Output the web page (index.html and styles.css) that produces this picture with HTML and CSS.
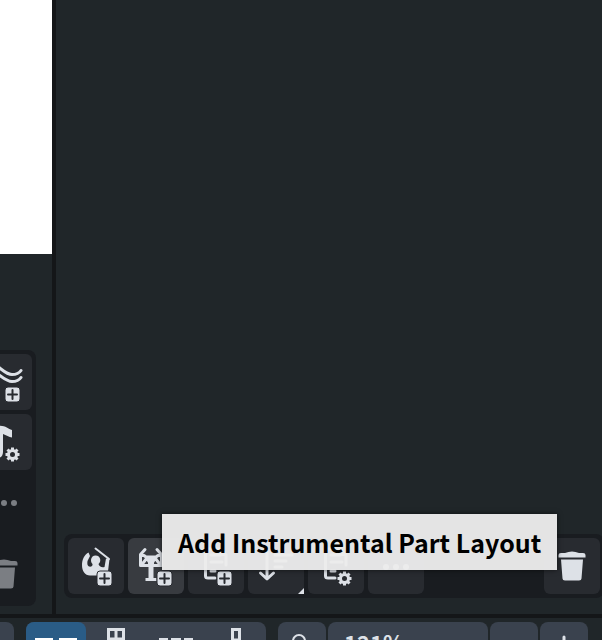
FILE: index.html
```html
<!DOCTYPE html>
<html lang="en">
<head>
    <meta charset="UTF-8">
    <meta name="viewport" content="width=device-width, initial-scale=1.0">
    <title>Layouts</title>
    <link rel="stylesheet" href="styles.css">
</head>
<body>
    <div class="app">
        <div class="workspace">
            <div class="score-area">
                <div class="page"></div>
                <div class="toolbar toolbar-side">
                    <button class="tool" aria-label="Add flow">
                        <svg viewBox="0 0 56 56">
                            <g class="line"><path d="M14 9C21 9 28 20.500 36 20.500C41 20.500 44 18 45 16.500M14 16C21 17 28 27.500 36 27.500C41 27.500 44 25 45 23.500"/></g>
                            <use href="#plus-badge"/>
                        </svg>
                    </button>
                    <button class="tool" aria-label="Notation options">
                        <svg viewBox="0 0 56 56">
                            <path d="M22 12C29 11 32 15 36 16V23.500C33 23 30 21 27 20V38C27 43 23 45 18 45V40L22 38Z"/>
                            <use href="#gear-badge"/>
                        </svg>
                    </button>
                    <button class="tool" disabled aria-label="More">
                        <svg viewBox="0 0 56 56"><use href="#dots"/></svg>
                    </button>
                    <button class="tool push-down" disabled aria-label="Delete flow">
                        <svg viewBox="0 0 56 56"><use href="#trash"/></svg>
                    </button>
                </div>
            </div>
            <div class="layouts-panel">
                <div class="toolbar toolbar-bottom">
                    <button class="tool" aria-label="Add full score layout">
                        <svg viewBox="0 0 56 56">
                            <path d="M20.500 14.500C16 17 14 22 14 27C14 33 17 37.500 22 37.500H39.500L41.500 21L38 20.500L36.500 29C33.500 30 31 28 30.500 26C33.500 24 33 17.500 27.500 17.500C22.500 17.500 22 24 24.500 26C25 28 23 29 21 28.500C19.500 28 19 26 19.500 23L22 18Z"/>
                            <path class="baton" d="M27.500 10.500L41 21"/>
                            <use href="#plus-badge"/>
                        </svg>
                    </button>
                    <button class="tool hovered" aria-describedby="tip" aria-label="Add instrumental part layout">
                        <svg viewBox="0 0 56 56">
                            <path class="stand" d="M17 11.500L12.500 16.500V27.500H33.500V16.500L29 11.500M12.500 17.500H16L18 19H28L30 17.500H33.500M13.500 27L19 20L23 27L27 20L32.500 27"/>
                            <path d="M18 18H28L26 24V29H25.500V40H28.500V43H17.500V40H20.500V29H20V24Z"/>
                            <use href="#plus-badge"/>
                        </svg>
                    </button>
                    <button class="tool" aria-label="Add custom score layout">
                        <svg viewBox="0 0 56 56"><use href="#sheet"/><use href="#plus-badge"/></svg>
                    </button>
                    <button class="tool" aria-label="Sort layouts">
                        <svg viewBox="0 0 56 56">
                            <path class="line" d="M19 14V40M12.500 35L19 41L25.500 35M27 17H44M27 23H38M27 29H34"/>
                            <path d="M56 50V56H50Z"/>
                        </svg>
                    </button>
                    <button class="tool" aria-label="Layout options">
                        <svg viewBox="0 0 56 56"><use href="#sheet"/><use href="#gear-badge"/></svg>
                    </button>
                    <button class="tool" aria-label="More">
                        <svg viewBox="0 0 56 56"><use href="#dots"/></svg>
                    </button>
                    <button class="tool push-right" aria-label="Delete layout">
                        <svg viewBox="0 0 56 56"><use href="#trash"/></svg>
                    </button>
                    <div class="tooltip" role="tooltip" id="tip">Add Instrumental Part Layout</div>
                </div>
            </div>
        </div>

        <div class="status-bar">
            <button class="control control-first" aria-label="Previous"></button>
            <div class="view-group">
                <button class="view active" aria-label="Spreads horizontally">
                    <svg viewBox="0 0 60 48"><path d="M9 16H27V36H9ZM33 16H51V36H33Z"/></svg>
                </button>
                <button class="view" aria-label="Spreads vertically">
                    <svg viewBox="0 0 60 48"><path class="frame" d="M22.500 7.500H37.500V41H22.500ZM22 17H38M22 29H38M30 7V41"/></svg>
                </button>
                <button class="view" aria-label="Single pages horizontally">
                    <svg viewBox="0 0 60 48"><path d="M13 16H22V32H13ZM25 16H35V32H25ZM38 16H47V32H38Z"/></svg>
                </button>
                <button class="view" aria-label="Single pages vertically">
                    <svg viewBox="0 0 60 48"><path class="frame" d="M26.500 7.500H33.500V41H26.500ZM26 18H34M26 29H34"/></svg>
                </button>
            </div>
            <div class="zoom-group">
                <button class="control" aria-label="Zoom">
                    <svg viewBox="0 0 48 48"><g class="lens"><circle cx="21" cy="19" r="6"/><path d="M26 24L33 32"/></g></svg>
                </button>
                <input class="zoom-value" type="text" value="121%" aria-label="Zoom level">
                <button class="control" aria-label="Zoom out">
                    <svg viewBox="0 0 48 48"><path class="line" d="M15 24H33"/></svg>
                </button>
                <button class="control" aria-label="Zoom in">
                    <svg viewBox="0 0 48 48"><path class="line" d="M24 15V33M15 24H33"/></svg>
                </button>
            </div>
        </div>
    </div>

    <!-- shared icon parts -->
    <svg class="icon-parts">
        <symbol id="plus-badge" viewBox="0 0 56 56">
            <rect class="badge" x="29" y="33" width="15" height="15" rx="3"/>
            <path class="cut" d="M36.500 36V45M32 40.500H41"/>
        </symbol>
        <symbol id="gear-badge" viewBox="0 0 56 56">
            <circle class="ring" cx="36.500" cy="40.500" r="4"/>
            <path class="teeth" d="M36.500 33.500V37M36.500 44V47.500M29.500 40.500H33M40 40.500H43.500M31.500 35.500L34 38M39 43L41.500 45.500M41.500 35.500L39 38M34 43L31.500 45.500"/>
        </symbol>
        <symbol id="sheet" viewBox="0 0 56 56">
            <path class="line" d="M27 40H20Q17.500 40 17.500 38V13Q17.500 11 20 11H32L38 17V27M23 17H32M23 24H34M23 33H27"/>
            <path d="M31 10L39 18H31Z"/>
        </symbol>
        <symbol id="dots" viewBox="0 0 56 56">
            <circle cx="18" cy="29" r="3"/><circle cx="28" cy="29" r="3"/><circle cx="38" cy="29" r="3"/>
        </symbol>
        <symbol id="trash" viewBox="0 0 56 56">
            <path d="M14.500 19.500V17Q14.500 15 17 15H21Q28 12 35 15H39Q41.500 15 41.500 17V19.500ZM17 21.500H39L37.500 40.500Q37.500 42.500 35 42.500H21Q18.500 42.500 18.500 40.500Z"/>
        </symbol>
    </svg>
</body>
</html>
```

FILE: styles.css
```css
*{
    box-sizing: border-box;
}
body{
    margin: 0;
    background-color: #202629;
    color: #dde1e7;
    font-family: "Noto Sans CJK SC", "Open Sans", sans-serif;
}
button,input{
    margin: 0;
    padding: 0;
    border: none;
    color: inherit;
    font-family: inherit;
}
.app{
    display: flex;
    flex-direction: column;
    height: 100vh;
    overflow: hidden;
}
.workspace{
    display: flex;
    flex: 1;
    min-height: 0;
}

/* score area, left of the panel divider */
.score-area{
    display: flex;
    flex-direction: column;
    align-items: flex-end;
    width: 52px;
    overflow: hidden;
}
.page{
    flex: 1;
    width: 100%;
    margin-bottom: 96px;
    background-color: white;
}
.layouts-panel{
    display: flex;
    flex: 1;
    flex-direction: column;
    justify-content: flex-end;
    min-width: 0;
    padding: 0 0 16px 8px;
    border-left: 4px solid #141618;
}

.toolbar{
    display: flex;
    flex-shrink: 0;
    gap: 4px;
    padding: 4px;
    border-radius: 8px;
    background-color: #191c20;
}
.toolbar-side{
    flex-direction: column;
    height: 256px;
    margin: 0 16px 8px 0;
}
.toolbar-bottom{
    position: relative;
    margin-right: -2px;
}
.tool{
    flex-shrink: 0;
    width: 56px;
    height: 56px;
    border-radius: 6px;
    background-color: #282b30;
}
.tool:disabled{
    background-color: transparent;
    color: #7b7e83;
}
.hovered{
    background-color: #383b40;
}
.push-down{
    margin-top: auto;
}
.push-right{
    margin-left: auto;
}

.tooltip{
    position: absolute;
    left: 98px;
    bottom: 28px;
    padding: 0 16px;
    background-color: rgb(236, 236, 236, .96);
    box-shadow: 0 0 5px rgb(0, 0, 0, .6);
    color: black;
    font-size: 25px;
    font-weight: 700;
    line-height: 56px;
    white-space: nowrap;
}

/* status bar */
.status-bar{
    display: flex;
    flex-shrink: 0;
    gap: 12px;
    height: 26px;
    padding-top: 4px;
    border-top: 4px solid #141618;
    overflow: hidden;
}
.control,.view,.zoom-value{
    flex-shrink: 0;
    height: 48px;
    border-radius: 8px;
    background-color: #3a424e;
}
.control{
    width: 48px;
}
.control-first{
    margin-left: -34px;
}
.view-group{
    display: flex;
    flex-shrink: 0;
    height: 48px;
    border-radius: 8px;
    background-color: #3a424e;
}
.view{
    width: 60px;
    background-color: transparent;
}
.active{
    background-color: #2a5c86;
    color: white;
}
.zoom-group{
    display: flex;
    gap: 2px;
}
.zoom-value{
    width: 160px;
    padding: 0 0 8px 16px;
    font-size: 22px;
    font-weight: 700;
}

/* icons */
svg{
    display: block;
    width: 100%;
    height: 100%;
    fill: currentColor;
}
.icon-parts{
    position: absolute;
    width: 0;
    height: 0;
}
.line,.stand,.baton,.frame,.lens,.cut,.ring,.teeth{
    fill: none;
    stroke: currentColor;
    stroke-width: 3px;
    stroke-linecap: round;
    stroke-linejoin: round;
}
.baton,.lens,.cut{
    stroke-width: 2px;
}
.frame,.teeth{
    stroke-linecap: butt;
    stroke-linejoin: miter;
}
.badge{
    stroke: #282b30;
    stroke-width: 1px;
}
.cut{
    stroke: #282b30;
}
```
